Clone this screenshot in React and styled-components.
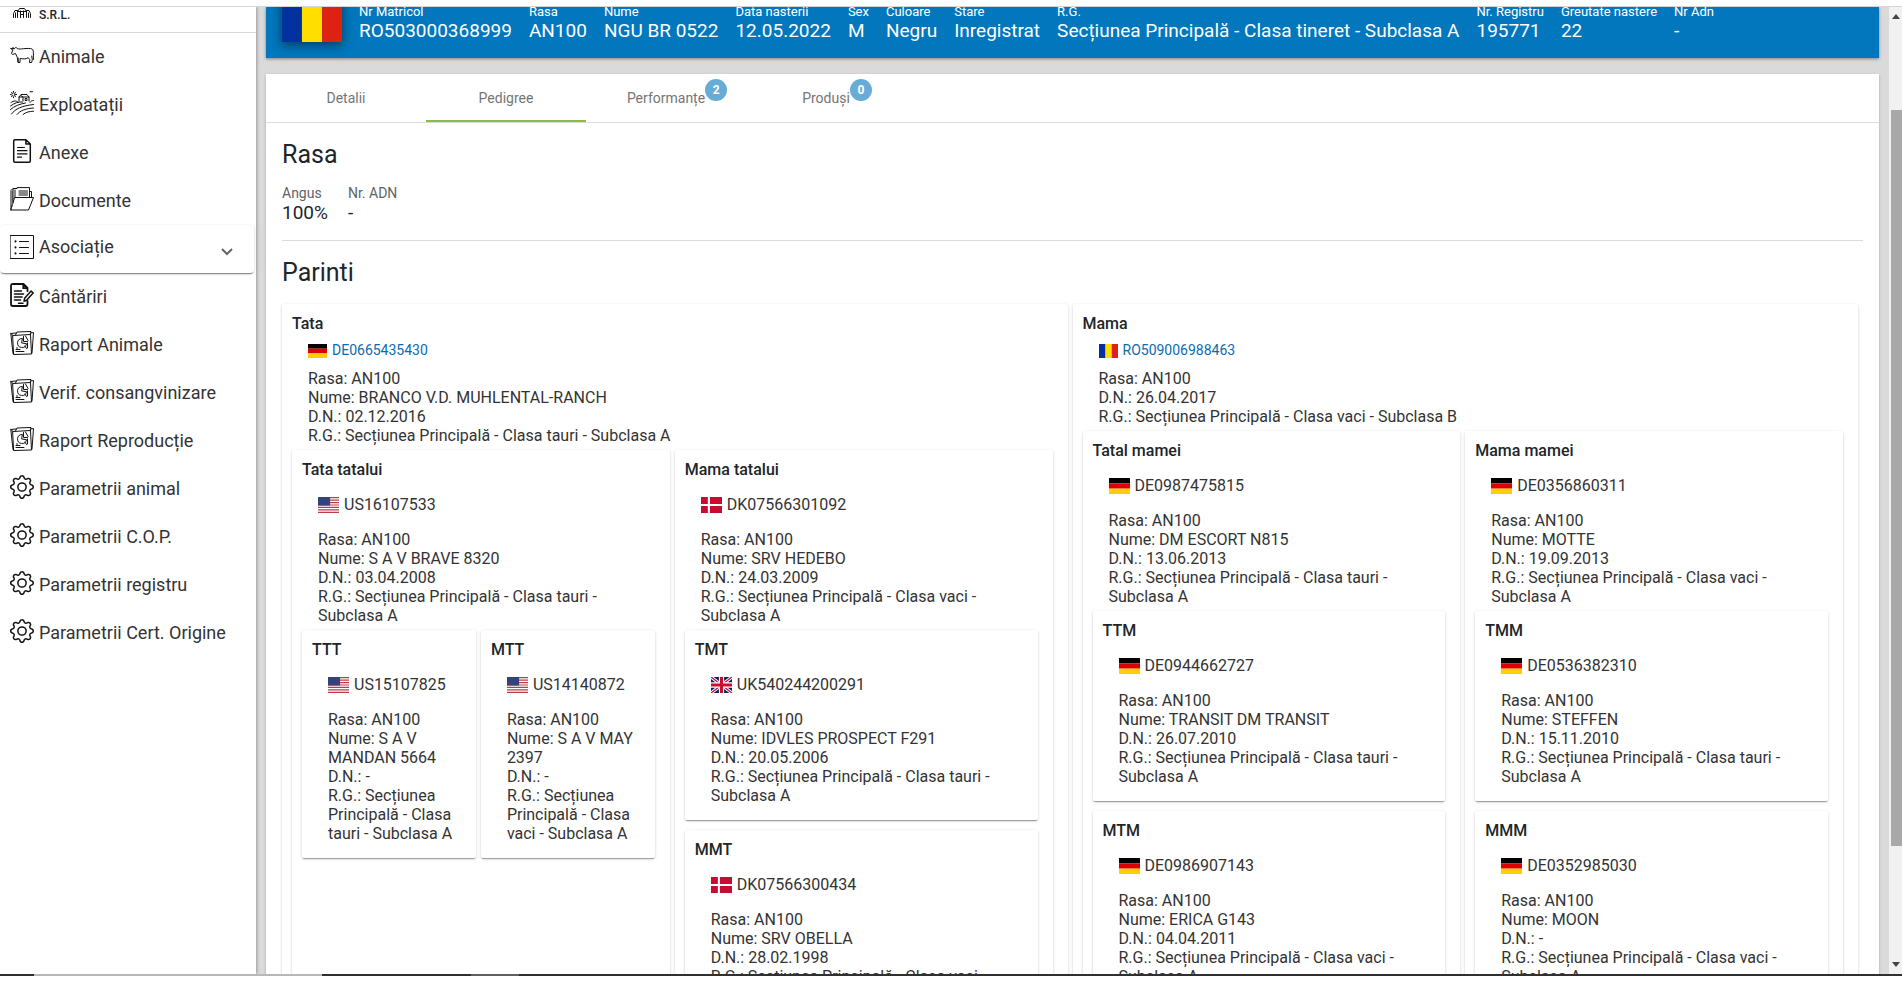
import React from "react";
import styled, { createGlobalStyle } from "styled-components";
import { BsGear } from "react-icons/bs";

const GlobalStyle = createGlobalStyle`
  * {
    box-sizing: border-box;
  }
  body {
    margin: 0;
    background: #fff;
    color: #212529;
    font-family: Roboto, "Liberation Sans", sans-serif;
    font-size: 16px;
    line-height: 19px;
  }
`;

const Page = styled.div`
  height: 100vh;
  display: flex;
  flex-direction: column;
  padding-bottom: 6px;
  overflow: hidden;
`;

const TopStrip = styled.div`
  height: 7px;
  flex: none;
  border-bottom: 1px solid #d5d5d5;
`;

const BottomStrip = styled.div`
  height: 2px;
  flex: none;
  background: linear-gradient(
    90deg,
    #303030 34px,
    #b8b8b8 34px 322px,
    #303030 322px 471px,
    #606060 471px 519px,
    #303030 519px
  );
`;

const Body = styled.div`
  flex: 1;
  min-height: 0;
  display: flex;
  overflow: hidden;
`;

const Sidebar = styled.nav`
  width: 256px;
  flex: none;
  background: #fff;
  box-shadow: 1px 0 3px rgba(0, 0, 0, 0.3);
  z-index: 1;
`;

const Company = styled.div`
  height: 26px;
  display: flex;
  align-items: flex-start;
  gap: 5px;
  padding-left: 10px;
  border-bottom: 1px solid #d8d8d8;
  font-size: 12px;
  line-height: 16px;
  font-weight: 500;
`;

const MenuLink = styled.a`
  height: 48px;
  display: flex;
  align-items: center;
  gap: 5px;
  padding: 0 0 1px 10px;
  color: #333;
  font-size: 18px;
  text-decoration: none;
  svg {
    flex: none;
    margin-bottom: 3px;
  }
`;

const MenuGroup = styled.button`
  width: 254px;
  height: 48px;
  display: flex;
  align-items: flex-start;
  gap: 5px;
  padding: 10px 20px 0 10px;
  border: 0;
  border-radius: 4px;
  background: #fff;
  box-shadow: 0 1px 3px rgba(0, 0, 0, 0.2), 0 2px 1px -1px rgba(0, 0, 0, 0.4);
  color: #333;
  font: inherit;
  font-size: 18px;
  line-height: 24px;
  text-align: left;
`;

const GroupName = styled.span`
  flex: 1;
`;

const Chevron = styled.svg`
  margin-top: 10px;
`;

const Main = styled.main`
  flex: 1;
  min-width: 0;
  padding: 0 10px;
  background: #dadada;
  overflow: hidden;
`;

const Header = styled.header`
  height: 51px;
  display: flex;
  align-items: flex-end;
  gap: 17px;
  padding: 0 16px 16px;
  background: #0277bd;
  color: #fff;
  box-shadow: 0 1px 3px rgba(0, 0, 0, 0.4);
`;

const HeaderFlag = styled.div`
  width: 60px;
  height: 45px;
  flex: none;
  box-shadow: 0 3px 10px rgba(0, 0, 0, 0.5);
  svg {
    display: block;
  }
`;

const Field = styled.div`
  flex: none;
  white-space: nowrap;
`;

const FieldLabel = styled.div`
  font-size: 13px;
  line-height: 16px;
`;

const FieldValue = styled.div`
  font-size: 19px;
  line-height: 22px;
`;

const Panel = styled.section`
  margin-top: 16px;
  background: #fff;
  box-shadow: 0 1px 3px rgba(0, 0, 0, 0.2);
`;

const Tabs = styled.div`
  height: 49px;
  display: flex;
  border-bottom: 1px solid #dcdcdc;
`;

const Tab = styled.button`
  width: 160px;
  padding: 2px 0 0;
  border: 0;
  border-bottom: 2px solid ${(props) => (props.$active ? "#8bb94f" : "transparent")};
  background: none;
  color: #757575;
  font: inherit;
  font-size: 14px;
`;

const TabLabel = styled.span`
  position: relative;
`;

const Badge = styled.span`
  position: absolute;
  left: 100%;
  top: -11px;
  width: 22px;
  height: 22px;
  border-radius: 50%;
  background: #67acd7;
  color: #fff;
  font-size: 12px;
  line-height: 22px;
  font-weight: 700;
`;

const Content = styled.div`
  padding: 16px;
`;

const Heading = styled.h2`
  margin: 0;
  font-size: 25px;
  line-height: 32px;
  font-weight: 400;
`;

const BreedRow = styled.div`
  display: flex;
  gap: 20px;
  padding: 14px 0 15px;
  margin-bottom: 16px;
  border-bottom: 1px solid #dcdcdc;
`;

const BreedLabel = styled.div`
  color: #5f6368;
  font-size: 14px;
  line-height: 16px;
`;

const BreedValue = styled.div`
  font-size: 19px;
  line-height: 24px;
`;

const Parents = styled.div`
  display: flex;
  gap: 5px;
  padding: 15px 5px 0 0;
`;

const Card = styled.article`
  flex: 1 1 0;
  min-width: 0;
  padding: 10px;
  border-radius: 2px;
  background: #fff;
  box-shadow: 0 1px 3px rgba(0, 0, 0, 0.2), 0 2px 1px -1px rgba(0, 0, 0, 0.3);
`;

const CardTitle = styled.h3`
  margin: 0;
  font-size: 16px;
  line-height: 19px;
  font-weight: 500;
`;

const Details = styled.div`
  padding: 0 10px 5px 16px;
  color: #333;
`;

const Matricol = styled.div`
  display: flex;
  align-items: center;
  gap: 5px;
  padding: ${(props) => (props.$main ? "8px 0 9px" : "16px 0")};
  font-size: ${(props) => (props.$main ? "14px" : "16px")};
  a {
    color: #0b6cad;
    text-decoration: none;
  }
`;

const Ancestors = styled.div`
  display: flex;
  flex-direction: ${(props) => (props.$stacked ? "column" : "row")};
  align-items: ${(props) => (props.$stacked ? "stretch" : "flex-start")};
  gap: ${(props) => (props.$stacked ? "10px" : "5px")};
  padding-right: 5px;
`;

// the grandparent cards run down to the end of their column
const Grandparents = styled(Ancestors)`
  align-items: stretch;
`;

const StackedCard = styled(Card)`
  flex: none;
`;

const ScrollBar = styled.div`
  width: 13px;
  flex: none;
  display: flex;
  flex-direction: column;
  background: #f1f1f1;
`;

const ScrollEnd = styled.div`
  flex: ${(props) => props.$size} 1 0;
  display: flex;
  justify-content: center;
  align-items: ${(props) => (props.$down ? "flex-end" : "flex-start")};
  svg {
    margin: 7px 0;
  }
`;

const ScrollThumb = styled.div`
  flex: 736 1 0;
  margin-left: 2px;
  background: #a8a8a8;
`;

function Flag({ country, width, height }) {
  return (
    <svg width={width} height={height} viewBox="0 0 40 30" preserveAspectRatio="none">
      {country === "ro" && (
        <>
          <path fill="#00319c" d="M0 0h14v30H0z" />
          <path fill="#ffde00" d="M13.3 0h13.4v30H13.3z" />
          <path fill="#de2110" d="M26.7 0H40v30H26.7z" />
        </>
      )}
      {country === "de" && (
        <>
          <path d="M0 0h40v10H0z" />
          <path fill="#d00" d="M0 10h40v10H0z" />
          <path fill="#ffce00" d="M0 20h40v10H0z" />
        </>
      )}
      {country === "dk" && (
        <>
          <path fill="#c60c30" d="M0 0h40v30H0z" />
          <path fill="#fff" d="M13 0h4v30h-4zM0 13h40v4H0z" />
        </>
      )}
      {country === "us" && (
        <>
          <path fill="#fff" d="M0 0h40v30H0z" />
          <path
            stroke="#bd3d44"
            strokeWidth="2.3"
            d="M0 1.2h40M0 5.8h40M0 10.4h40M0 15h40M0 19.6h40M0 24.2h40M0 28.8h40"
          />
          <path fill="#34447a" d="M0 0h23v16H0z" />
        </>
      )}
      {country === "uk" && (
        <>
          <path fill="#012169" d="M0 0h40v30H0z" />
          <path stroke="#fff" strokeWidth="6" d="m0 0 40 30M40 0 0 30" />
          <path stroke="#c8102e" strokeWidth="2.5" d="m0 0 40 30M40 0 0 30" />
          <path fill="#fff" d="M15 0h10v30H15zM0 10h40v10H0z" />
          <path fill="#c8102e" d="M17 0h6v30h-6zM0 12h40v6H0z" />
        </>
      )}
    </svg>
  );
}

function Icon({ children, height = 24 }) {
  return (
    <svg
      width="24"
      height={height}
      viewBox={`0 0 24 ${height}`}
      fill="none"
      stroke="#111"
      strokeLinecap="round"
      strokeLinejoin="round"
    >
      {children}
    </svg>
  );
}

const BarnIcon = () => (
  <Icon height={12}>
    <path d="M7.500 10.500V4.500L9.500 1.500h5l2 3v6M7.500 4.500h9M10.500 4v6.500M13.500 4v6.500M3.500 10.500V6.500l1.500-3 2.500 0M20.500 10.500V6.500L19 3.500h-2.500M5.500 6v4.500M18.500 6v4.500M10.500 7.500h3" />
  </Icon>
);

const CowIcon = () => (
  <Icon>
    <path d="M1 5.500 4.200 5.800C4.500 4.800 5.500 4.400 6.200 4.600L7.500 5.500C9 6.400 11 5.900 13.500 5.700 17 5.400 20 5.200 22.200 6c1 .6 1.200 2.500 1.200 5v5.500M1 5.500c.2 1 1 1.400 2 1.400L1.600 10c-.2 1 .6 1.500 1.500 1.300L5.500 10.500l1.800 4 .7 5H10l.2-4.200c2.800 1 5.800.7 8-.6l1.600 2L19.500 19.500h2.200l.6-3-.6-3.500M4.200 5.800 2.800 4.300M8.200 15v4" />
  </Icon>
);

const FarmIcon = () => (
  <Icon>
    <circle cx="3.500" cy="3.500" r="1.700" />
    <path d="M3.500.4v.4M3.500 6.300v.4M.5 3.500h.4M6.200 3.500h.4M1.300 1.300l.2.200M5.700 1.300l-.2.200M1.300 5.700l.2-.2M5.700 5.700l-.2-.2M20 .7h2.500M9 10V6l2-2.500h6L19 6v4M9 6h10M11 4.500 13 6v4M15.500 7.500h1.500v2h-1.500zM1 11.500c3-2 5-2 7-.5M.5 15c4-3 8-4.500 12-4M.5 18.500c4-3.500 9-5.500 15-6.500M1.500 23c4-5.500 10-8 22-9.500M7 23.500c3-4 9-6 16.500-6.500M13 23.500c3-2.500 6-3 10.500-3.300M20 11.500c1-1.500 2-2 3.500-2" />
  </Icon>
);

const FileIcon = () => (
  <Icon>
    <path strokeWidth="1.500" d="M3.700 2c0-.8.5-1.200 1.200-1.200h11L20.300 5v17c0 .8-.4 1.200-1.200 1.200H4.900c-.7 0-1.200-.4-1.200-1.200zM15.900.8V5h4.400" />
    <path strokeWidth="1.200" d="M7.500 8.500h7M7.500 11.700h9.500M7.500 14.900h9.500M7.500 18.200h4" />
  </Icon>
);

const FolderIcon = () => (
  <Icon>
    <path d="M1 23V3.500L3 1.500h4V.6h12.500v10M1 23h17.500l5-12.500H5zM21.500 10.500v-6h-2M3 2v14M5 3v7.500M9 4h8.500M9 6h8.500M9 8h8.500" />
    <path d="M2.500 4v15" stroke="#555" />
  </Icon>
);

const ListIcon = () => (
  <Icon>
    <path d="M.5.5h23v23H.5zM9.500 6.500h9M9.500 12.500h9M9.500 18.500h9" />
    <path strokeWidth="2" d="M5.500 6.200v.3M5.500 12.300v.3M5.500 18.300v.3" />
  </Icon>
);

const NoteIcon = () => (
  <Icon>
    <path strokeWidth="1.800" d="M17.500 8V5L13.500 1H3C1.600 1 1 1.600 1 3v18c0 1.400.6 2 2 2h12.500c1.400 0 2-.6 2-2v-3M13.300 1v4.200h4.200" />
    <path strokeWidth="1.500" d="M4.500 8h7M4.500 11h9M4.500 14h7.500M4.500 17h6M8.500 20.300h4.500M14 18.300l.6-3 6.500-7.200 2 1.800-6.500 7.300z" />
  </Icon>
);

const ReportIcon = () => (
  <Icon>
    <path d="M3 4.500 20.500 3.500 21.500 23 4 23.500zM3 4.500 .8 2.500 3 22.500l1 1M5.500 4 7 1l14-.5-.5 3M.8 2.500 6 2M20.500 2l3-.5L22 22" />
    <path d="M12 7.500a4.500 4.500 0 1 0 4.500 5.200L12 12zM13.500 5.500v5h4M15.500 5l2.500 4.500M17.500 12v5M15 15l1.500 2.500M6 18.500h4M6 20.500h8M7 16.500v1" />
  </Icon>
);

const GearIcon = () => <BsGear size={24} color="#111" />;

const menuTop = [
  { name: "Animale", icon: CowIcon },
  { name: "Exploatații", icon: FarmIcon },
  { name: "Anexe", icon: FileIcon },
  { name: "Documente", icon: FolderIcon },
];

const menuAssociation = [
  { name: "Cântăriri", icon: NoteIcon },
  { name: "Raport Animale", icon: ReportIcon },
  { name: "Verif. consangvinizare", icon: ReportIcon },
  { name: "Raport Reproducție", icon: ReportIcon },
  { name: "Parametrii animal", icon: GearIcon },
  { name: "Parametrii C.O.P.", icon: GearIcon },
  { name: "Parametrii registru", icon: GearIcon },
  { name: "Parametrii Cert. Origine", icon: GearIcon },
];

const headerFields = [
  ["Nr Matricol", "RO503000368999"],
  ["Rasa", "AN100"],
  ["Nume", "NGU BR 0522"],
  ["Data nasterii", "12.05.2022"],
  ["Sex", "M"],
  ["Culoare", "Negru"],
  ["Stare", "Inregistrat"],
  ["R.G.", "Secțiunea Principală - Clasa tineret - Subclasa A"],
  ["Nr. Registru", "195771"],
  ["Greutate nastere", "22"],
  ["Nr Adn", "-"],
];

const tabs = [
  { name: "Detalii" },
  { name: "Pedigree", active: true },
  { name: "Performanțe", count: 2 },
  { name: "Produși", count: 0 },
];

const bull = "Secțiunea Principală - Clasa tauri - Subclasa A";
const cow = "Secțiunea Principală - Clasa vaci - Subclasa A";

const father = {
  title: "Tata",
  country: "de",
  id: "DE0665435430",
  name: "BRANCO V.D. MUHLENTAL-RANCH",
  born: "02.12.2016",
  rg: bull,
  parents: [
    {
      title: "Tata tatalui",
      country: "us",
      id: "US16107533",
      name: "S A V BRAVE 8320",
      born: "03.04.2008",
      rg: bull,
      parents: [
        { title: "TTT", country: "us", id: "US15107825", name: "S A V MANDAN 5664", born: "-", rg: bull },
        { title: "MTT", country: "us", id: "US14140872", name: "S A V MAY 2397", born: "-", rg: cow },
      ],
    },
    {
      title: "Mama tatalui",
      country: "dk",
      id: "DK07566301092",
      name: "SRV HEDEBO",
      born: "24.03.2009",
      rg: cow,
      stacked: true,
      parents: [
        { title: "TMT", country: "uk", id: "UK540244200291", name: "IDVLES PROSPECT F291", born: "20.05.2006", rg: bull },
        { title: "MMT", country: "dk", id: "DK07566300434", name: "SRV OBELLA", born: "28.02.1998", rg: cow },
      ],
    },
  ],
};

const mother = {
  title: "Mama",
  country: "ro",
  id: "RO509006988463",
  born: "26.04.2017",
  rg: "Secțiunea Principală - Clasa vaci - Subclasa B",
  parents: [
    {
      title: "Tatal mamei",
      country: "de",
      id: "DE0987475815",
      name: "DM ESCORT N815",
      born: "13.06.2013",
      rg: bull,
      stacked: true,
      parents: [
        { title: "TTM", country: "de", id: "DE0944662727", name: "TRANSIT DM TRANSIT", born: "26.07.2010", rg: bull },
        { title: "MTM", country: "de", id: "DE0986907143", name: "ERICA G143", born: "04.04.2011", rg: cow },
      ],
    },
    {
      title: "Mama mamei",
      country: "de",
      id: "DE0356860311",
      name: "MOTTE",
      born: "19.09.2013",
      rg: cow,
      stacked: true,
      parents: [
        { title: "TMM", country: "de", id: "DE0536382310", name: "STEFFEN", born: "15.11.2010", rg: bull },
        { title: "MMM", country: "de", id: "DE0352985030", name: "MOON", born: "-", rg: cow },
      ],
    },
  ],
};

function AnimalCard({ animal, main, stacked }) {
  const Wrapper = stacked ? StackedCard : Card;
  const Row = main ? Grandparents : Ancestors;
  return (
    <Wrapper>
      <CardTitle>{animal.title}</CardTitle>
      <Details>
        <Matricol $main={main}>
          <Flag country={animal.country} width={main ? 19 : 21} height={main ? 14 : 16} />
          {main ? <a href="#animal">{animal.id}</a> : <span>{animal.id}</span>}
        </Matricol>
        <div>Rasa: AN100</div>
        {animal.name && <div>Nume: {animal.name}</div>}
        <div>D.N.: {animal.born}</div>
        <div>R.G.: {animal.rg}</div>
      </Details>
      {animal.parents && (
        <Row $stacked={animal.stacked}>
          {animal.parents.map((parent) => (
            <AnimalCard key={parent.title} animal={parent} stacked={animal.stacked} />
          ))}
        </Row>
      )}
    </Wrapper>
  );
}

function MenuItem({ item }) {
  const ItemIcon = item.icon;
  return (
    <MenuLink href="#menu">
      <ItemIcon />
      {item.name}
    </MenuLink>
  );
}

function App() {
  return (
    <Page>
      <GlobalStyle />
      <TopStrip />
      <Body>
        <Sidebar>
          <Company>
            <BarnIcon />
            S.R.L.
          </Company>
          {menuTop.map((item) => (
            <MenuItem key={item.name} item={item} />
          ))}
          <MenuGroup>
            <ListIcon />
            <GroupName>Asociație</GroupName>
            <Chevron width="14" height="14" viewBox="0 0 14 14" fill="none" stroke="#666" strokeWidth="2">
              <path d="m2 4 5 5 5-5" />
            </Chevron>
          </MenuGroup>
          {menuAssociation.map((item) => (
            <MenuItem key={item.name} item={item} />
          ))}
        </Sidebar>
        <Main>
          <Header>
            <HeaderFlag>
              <Flag country="ro" width={60} height={45} />
            </HeaderFlag>
            {headerFields.map(([label, value]) => (
              <Field key={label}>
                <FieldLabel>{label}</FieldLabel>
                <FieldValue>{value}</FieldValue>
              </Field>
            ))}
          </Header>
          <Panel>
            <Tabs>
              {tabs.map((tab) => (
                <Tab key={tab.name} $active={tab.active}>
                  <TabLabel>
                    {tab.name}
                    {tab.count !== undefined && <Badge>{tab.count}</Badge>}
                  </TabLabel>
                </Tab>
              ))}
            </Tabs>
            <Content>
              <Heading>Rasa</Heading>
              <BreedRow>
                <div>
                  <BreedLabel>Angus</BreedLabel>
                  <BreedValue>100%</BreedValue>
                </div>
                <div>
                  <BreedLabel>Nr. ADN</BreedLabel>
                  <BreedValue>-</BreedValue>
                </div>
              </BreedRow>
              <Heading>Parinti</Heading>
              <Parents>
                <AnimalCard animal={father} main />
                <AnimalCard animal={mother} main />
              </Parents>
            </Content>
          </Panel>
        </Main>
        <ScrollBar>
          <ScrollEnd $size={103}>
            <svg width="8" height="5" viewBox="0 0 8 5">
              <path fill="#444" d="M0 5 4 0l4 5z" />
            </svg>
          </ScrollEnd>
          <ScrollThumb />
          <ScrollEnd $size={128} $down>
            <svg width="8" height="5" viewBox="0 0 8 5">
              <path fill="#444" d="m0 0 4 5 4-5z" />
            </svg>
          </ScrollEnd>
        </ScrollBar>
      </Body>
      <BottomStrip />
    </Page>
  );
}

export default App;
